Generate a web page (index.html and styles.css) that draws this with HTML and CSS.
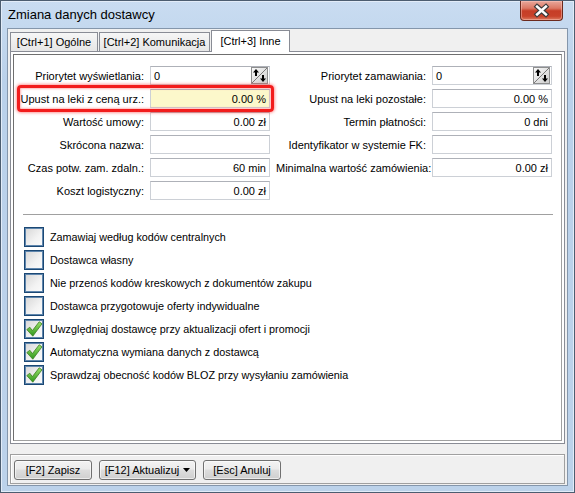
FILE: index.html
```html
<!DOCTYPE html>
<html lang="pl">
<head>
<meta charset="utf-8">
<title>Zmiana danych dostawcy</title>
<link rel="stylesheet" href="styles.css">
</head>
<body>
<div class="window">
  <div class="titlebar">
    <span class="title">Zmiana danych dostawcy</span>
    <div class="close">
      <svg width="42" height="19" viewBox="0 0 42 19">
        <path d="M16.5 5.5 L25.5 13.5 M25.5 5.5 L16.5 13.5" stroke="#3b3b3b" stroke-width="5" stroke-linecap="square" fill="none"/>
        <path d="M16.5 5.5 L25.5 13.5 M25.5 5.5 L16.5 13.5" stroke="#ffffff" stroke-width="2.6" stroke-linecap="square" fill="none"/>
      </svg>
    </div>
  </div>
  <div class="client">
    <div class="tabs">
      <div class="tab t1">[Ctrl+1] Ogólne</div>
      <div class="tab t2">[Ctrl+2] Komunikacja</div>
      <div class="tab t3 sel">[Ctrl+3] Inne</div>
    </div>
    <div class="tabpanel">
      <div class="inner">
        <div class="form">
          <div class="lbl">Priorytet wyświetlania:</div>
          <div class="field"><span>0</span>
            <svg class="spin" width="17" height="17" viewBox="0 0 17 17">
              <defs><linearGradient id="sg1" x1="0" y1="0" x2="1" y2="1"><stop offset="0" stop-color="#fafafa"/><stop offset="1" stop-color="#cdcdcd"/></linearGradient></defs>
              <rect x=".5" y=".5" width="16" height="16" fill="url(#sg1)" stroke="#8e8f8f"/>
              <line x1="1" y1="16" x2="16" y2="1" stroke="#7a7a7a"/>
              <path d="M5 2 L8 5.5 H6 V9 H4 V5.5 H2 Z" fill="#000"/>
              <path d="M12 15 L15 11.5 H13 V8 H11 V11.5 H9 Z" fill="#000"/>
            </svg>
          </div>
          <div class="lbl">Priorytet zamawiania:</div>
          <div class="field"><span>0</span>
            <svg class="spin" width="17" height="17" viewBox="0 0 17 17">
              <defs><linearGradient id="sg2" x1="0" y1="0" x2="1" y2="1"><stop offset="0" stop-color="#fafafa"/><stop offset="1" stop-color="#cdcdcd"/></linearGradient></defs>
              <rect x=".5" y=".5" width="16" height="16" fill="url(#sg2)" stroke="#8e8f8f"/>
              <line x1="1" y1="16" x2="16" y2="1" stroke="#7a7a7a"/>
              <path d="M5 2 L8 5.5 H6 V9 H4 V5.5 H2 Z" fill="#000"/>
              <path d="M12 15 L15 11.5 H13 V8 H11 V11.5 H9 Z" fill="#000"/>
            </svg>
          </div>

          <div class="lbl">Upust na leki z ceną urz.:</div>
          <div class="field right hl">0.00 %</div>
          <div class="lbl">Upust na leki pozostałe:</div>
          <div class="field right">0.00 %</div>

          <div class="lbl">Wartość umowy:</div>
          <div class="field right">0.00 zł</div>
          <div class="lbl">Termin płatności:</div>
          <div class="field right">0 dni</div>

          <div class="lbl">Skrócona nazwa:</div>
          <div class="field"></div>
          <div class="lbl">Identyfikator w systemie FK:</div>
          <div class="field"></div>

          <div class="lbl">Czas potw. zam. zdaln.:</div>
          <div class="field right">60 min</div>
          <div class="lbl">Minimalna wartość zamówienia:</div>
          <div class="field right">0.00 zł</div>

          <div class="lbl">Koszt logistyczny:</div>
          <div class="field right">0.00 zł</div>

          <div class="hlbox"></div>
        </div>
        <div class="sep"></div>
        <div class="checks">
          <div class="chk"><span class="box"></span><span>Zamawiaj według kodów centralnych</span></div>
          <div class="chk"><span class="box"></span><span>Dostawca własny</span></div>
          <div class="chk"><span class="box"></span><span>Nie przenoś kodów kreskowych z dokumentów zakupu</span></div>
          <div class="chk"><span class="box"></span><span>Dostawca przygotowuje oferty indywidualne</span></div>
          <div class="chk"><span class="box"><svg width="18" height="18" viewBox="0 0 18 18"><defs><linearGradient id="cg1" x1="0" y1="0" x2="0" y2="1"><stop offset="0" stop-color="#9be36a"/><stop offset="1" stop-color="#2e951c"/></linearGradient></defs><path d="M1.8 9.6 L4.8 7.2 L7.4 10.6 L14.2 1.8 L17 3.8 L7.8 16.2 Z" fill="url(#cg1)" stroke="#3d7f22" stroke-width=".8" stroke-linejoin="round"/></svg></span><span>Uwzględniaj dostawcę przy aktualizacji ofert i promocji</span></div>
          <div class="chk"><span class="box"><svg width="18" height="18" viewBox="0 0 18 18"><defs><linearGradient id="cg2" x1="0" y1="0" x2="0" y2="1"><stop offset="0" stop-color="#9be36a"/><stop offset="1" stop-color="#2e951c"/></linearGradient></defs><path d="M1.8 9.6 L4.8 7.2 L7.4 10.6 L14.2 1.8 L17 3.8 L7.8 16.2 Z" fill="url(#cg2)" stroke="#3d7f22" stroke-width=".8" stroke-linejoin="round"/></svg></span><span>Automatyczna wymiana danych z dostawcą</span></div>
          <div class="chk"><span class="box"><svg width="18" height="18" viewBox="0 0 18 18"><defs><linearGradient id="cg3" x1="0" y1="0" x2="0" y2="1"><stop offset="0" stop-color="#9be36a"/><stop offset="1" stop-color="#2e951c"/></linearGradient></defs><path d="M1.8 9.6 L4.8 7.2 L7.4 10.6 L14.2 1.8 L17 3.8 L7.8 16.2 Z" fill="url(#cg3)" stroke="#3d7f22" stroke-width=".8" stroke-linejoin="round"/></svg></span><span>Sprawdzaj obecność kodów BLOZ przy wysyłaniu zamówienia</span></div>
        </div>
      </div>
    </div>
    <div class="buttonbar">
      <button class="btn b1">[F2] Zapisz</button>
      <button class="btn b2">[F12] Aktualizuj <svg class="caret" width="7" height="4" viewBox="0 0 7 4"><path d="M0 0 H7 L3.5 4 Z" fill="#000"/></svg></button>
      <button class="btn b3">[Esc] Anuluj</button>
    </div>
  </div>
</div>
</body>
</html>
```
FILE: styles.css
```css
* { box-sizing: border-box; }

body {
  margin: 0;
  font-family: "Liberation Sans", Arial, sans-serif;
  font-size: 11px;
  color: #000;
}

.window {
  width: 575px;
  height: 493px;
  border: 1px solid #4c5d70;
  background: linear-gradient(#c9dcf1, #bad1ea 80px, #bcd2ea);
  box-shadow: inset 0 0 0 1px #e2ecf8;
  padding: 0 6px 6px;
  display: flex;
  flex-direction: column;
}

.titlebar {
  height: 27px;
  display: flex;
  justify-content: space-between;
  align-items: flex-start;
}

.title {
  font-size: 13px;
  padding: 6px 0 0 1px;
  color: #000;
}

.close {
  width: 43px;
  height: 20px;
  margin-right: 5px;
  border: 1px solid #6b2a1e;
  border-top: 0;
  border-radius: 0 0 4px 4px;
  background: linear-gradient(#e8a89b 0%, #dc7864 38%, #c63d26 52%, #c8422a 80%, #dc7a5f 100%);
  box-shadow: inset 0 0 0 1px rgba(255, 205, 195, 0.45);
  display: flex;
  align-items: center;
  justify-content: center;
}

.client {
  flex: 1;
  background: #f0f0f0;
  border: 1px solid #8496ab;
  display: flex;
  flex-direction: column;
}

.tabs {
  height: 23px;
  margin-bottom: -1px;
  padding-left: 2px;
  display: flex;
  align-items: flex-end;
  position: relative;
  z-index: 1;
}

.tab {
  height: 19px;
  margin-bottom: 1px;
  border: 1px solid #898c95;
  border-bottom: 0;
  background: linear-gradient(#f6f6f6, #e6e6e6);
  display: flex;
  align-items: center;
  justify-content: center;
  white-space: nowrap;
}

.t1 { width: 88px; }
.t2 { width: 111px; margin-left: 1px; }
.t3 { width: 79px; margin-left: 1px; }

.tab.sel {
  height: 22px;
  margin-bottom: 0;
  background: #fff;
  padding-bottom: 1px;
}

.tabpanel {
  height: 393px;
  margin: 0 2px;
  border: 1px solid #898c95;
  background: #fff;
  padding: 2px;
}

.inner {
  height: 100%;
  border: 1px solid #a0a0a0;
  border-top-color: #6f6f6f;
  border-left-color: #6f6f6f;
  background: #fff;
  padding-top: 11px;
}

.form {
  position: relative;
  display: grid;
  grid-template-columns: 130px 120px 150px 120px;
  grid-auto-rows: 19px;
  column-gap: 6px;
  row-gap: 4px;
}

.lbl {
  text-align: right;
  white-space: nowrap;
  align-self: center;
}

.field {
  height: 19px;
  border: 1px solid #ccd0d6;
  border-top-color: #aeb1b8;
  background: #fff;
  display: flex;
  align-items: center;
  padding: 0 3px;
  white-space: nowrap;
}

.field.right { justify-content: flex-end; }
.field.hl { background: #fcf8cb; }

.spin {
  margin-left: auto;
  margin-right: -2px;
}

.hlbox {
  position: absolute;
  left: 3px;
  top: 19px;
  width: 257px;
  height: 27px;
  border: 3px solid #f21c1c;
  border-radius: 4px;
  box-shadow: 0 0 3px 1px rgba(255, 70, 70, 0.55), inset 0 0 2px 1px rgba(255, 90, 90, 0.45);
  pointer-events: none;
}

.sep {
  height: 1px;
  background: #a0a0a0;
  margin: 14px 8px 0 9px;
}

.checks {
  margin: 12px 0 0 10px;
  display: flex;
  flex-direction: column;
  gap: 3px;
  font-size: 10.8px;
}

.chk {
  height: 20px;
  display: flex;
  align-items: center;
  gap: 6px;
  white-space: nowrap;
}

.box {
  width: 20px;
  height: 20px;
  border: 1px solid #1b4874;
  box-shadow: inset 0 0 0 1px #5f86ad;
  background: linear-gradient(135deg, #d6d6d6, #f3f3f3 60%, #fbfbfb);
  display: flex;
  align-items: center;
  justify-content: center;
}

.buttonbar {
  height: 30px;
  margin: 10px 2px 0;
  border: 1px solid #a0a0a0;
  box-shadow: inset 1px 1px 0 #ffffff;
  padding: 5px 0 0 3px;
  display: flex;
  align-items: flex-start;
  gap: 7px;
}

.btn {
  height: 20px;
  border: 1px solid #707070;
  border-radius: 3px;
  background: linear-gradient(#f3f3f3, #ebebeb 45%, #dddddd 50%, #cfcfcf);
  box-shadow: inset 0 0 0 1px rgba(255, 255, 255, 0.6);
  font: inherit;
  color: #000;
  padding: 0;
  display: flex;
  align-items: center;
  justify-content: center;
  gap: 4px;
}

.b1 { width: 78px; }
.b2 { width: 97px; }
.b3 { width: 78px; }
```
